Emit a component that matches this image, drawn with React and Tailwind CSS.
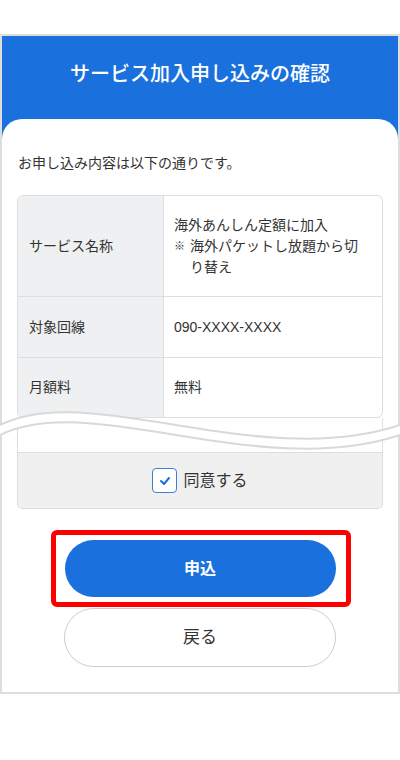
import React from 'react';

const jp = { fontFamily: '"Liberation Sans", "Noto Sans CJK JP", sans-serif' };

function Wave() {
  // white band with two grey edges that "cuts" the table
  return (
    <svg
      className="absolute left-[-2px] top-[364px] w-[400px] h-[80px] pointer-events-none"
      viewBox="0 0 400 80"
    >
      <path
        d="M0 25 C 90 -20, 260 72, 400 25 L 400 35 C 260 82, 90 -10, 0 35 Z"
        fill="#ffffff"
      />
      <path d="M0 25 C 90 -20, 260 72, 400 25" fill="none" stroke="#d9d9d9" strokeWidth="2" />
      <path d="M0 35 C 90 -10, 260 82, 400 35" fill="none" stroke="#d9d9d9" strokeWidth="2" />
    </svg>
  );
}

function Row({ label, children, className }) {
  return (
    <div className={`flex border-[#dedede] ${className}`}>
      <div className="w-[146px] shrink-0 bg-[#eff0f2] border-r border-[#dedede] pl-[11px] flex items-center">
        {label}
      </div>
      <div className="flex-1 pl-[10px] pr-[14px] flex items-center">{children}</div>
    </div>
  );
}

export default function App() {
  return (
    <div className="w-[400px] h-[760px] bg-white text-[#333] pt-[34px]" style={jp}>
      <div className="relative h-[660px] border-2 border-[#dddddd] bg-[#1a70dc] flex flex-col">
        <div className="h-[83px] shrink-0 pt-[26px] text-center text-white text-[20px] leading-[24px] font-medium">
          サービス加入申し込みの確認
        </div>
        <div className="flex-1 bg-white rounded-t-[20px] px-[15px] pt-[34px]">
          <p className="text-[14px] leading-[20px] pl-[1px]">お申し込み内容は以下の通りです。</p>

          <div className="mt-[22px] border border-[#dedede] rounded-[6px] overflow-hidden text-[14px]">
            <Row label="サービス名称" className="h-[100px]">
              <div className="leading-[21px]">
                <div>海外あんしん定額に加入</div>
                <div className="flex">
                  <span className="w-[16px] shrink-0 text-[11px] font-bold">※</span>
                  <span>海外パケットし放題から切り替え</span>
                </div>
              </div>
            </Row>
            <Row label="対象回線" className="h-[61px] border-t">
              <span>090-XXXX-XXXX</span>
            </Row>
            <Row label="月額料" className="h-[60px] border-t">
              <span>無料</span>
            </Row>
          </div>

          <div className="border-x border-b border-[#dedede] rounded-b-[5px] overflow-hidden">
            <div className="h-[34px] bg-white" />
            <div className="h-[56px] bg-[#f0f0f0] border-t border-[#dedede] flex items-center justify-center gap-[6px]">
              <span className="w-[25px] h-[25px] rounded-[4px] border-[1.5px] border-[#3d7fd3] bg-white flex items-center justify-center">
                <svg width="12" height="10" viewBox="0 0 12 10">
                  <path d="M2 5 L5 8 L10 2" fill="none" stroke="#1a70dc" strokeWidth="2" strokeLinecap="round" strokeLinejoin="round" />
                </svg>
              </span>
              <span className="text-[16px] leading-[20px]">同意する</span>
            </div>
          </div>

          <div className="mt-[31px] flex flex-col items-center gap-[11px]">
            <div className="relative">
              <button className="w-[271px] h-[57px] rounded-full bg-[#1a70dc] text-white text-[16px] font-bold">
                申込
              </button>
              <div className="absolute left-[-14px] right-[-15px] top-[-10px] bottom-[-10px] border-[5px] border-[#ff0000] rounded-[6px] pointer-events-none" />
            </div>
            <button className="w-[272px] h-[59px] rounded-full bg-white border border-[#cccccc] text-[17px]">
              戻る
            </button>
          </div>
        </div>
        <Wave />
      </div>
    </div>
  );
}
